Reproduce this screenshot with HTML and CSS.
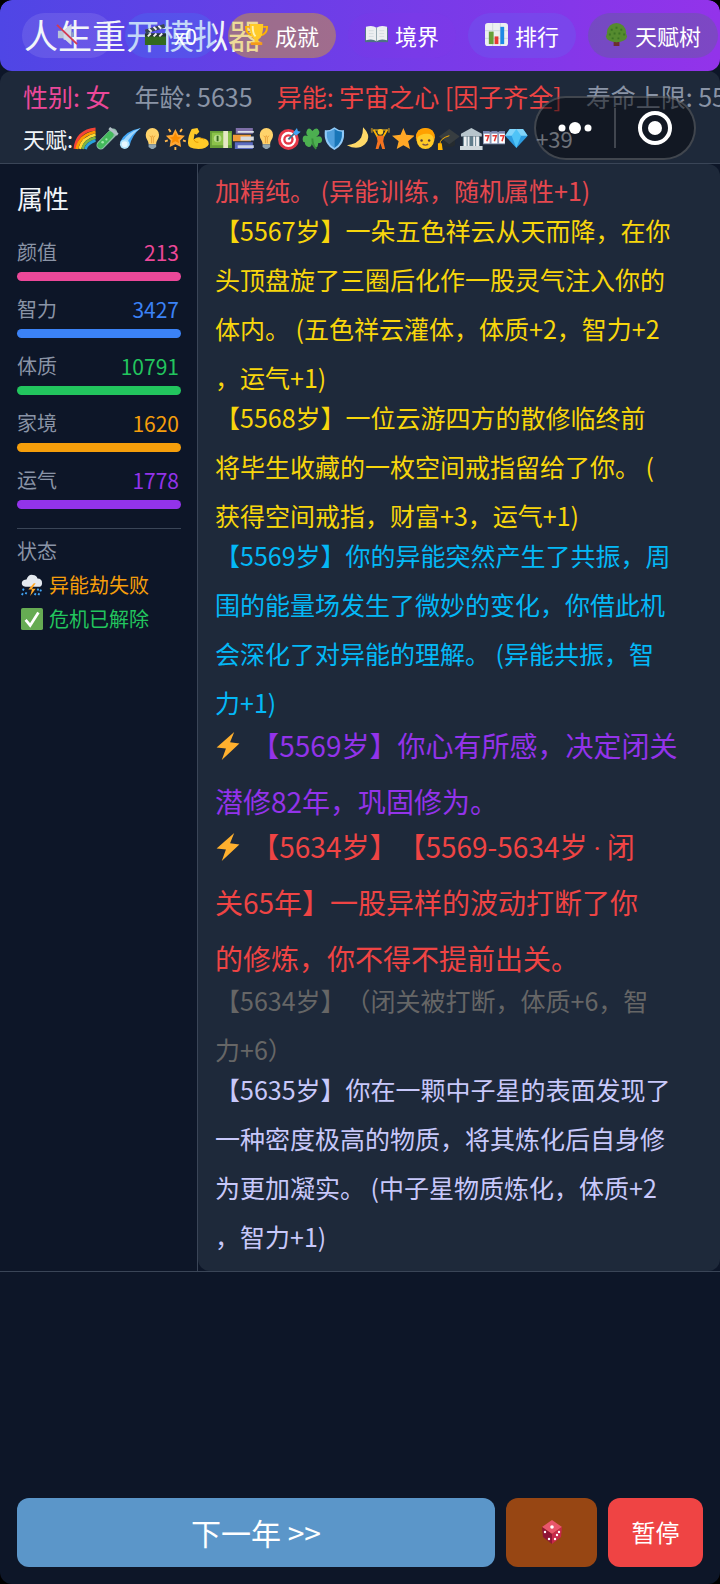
FILE: index.html
```
<!DOCTYPE html>
<html lang="zh-Hans">
<head>
  <meta charset="UTF-8">
  <meta name="viewport" content="width=device-width, initial-scale=1.0">
  <title>人生重开模拟器</title>
  <link rel="stylesheet" href="styles.css">
</head>
<body>
  <svg class="sprite" aria-hidden="true">
    <symbol id="mute" viewBox="0 0 24 24">
      <path d="M2 8h6l8-7v22l-8-7H2z" fill="#b9c3d8"/><path d="M8 8l8-7v22l-8-7z" fill="#d3d9e8"/>
      <path d="M16 8q5 4 0 8z" fill="#8d9ac4"/><path d="M1 2l21 20" stroke="#d23a55" stroke-width="2"/>
    </symbol>
    <symbol id="clapper" viewBox="0 0 24 24">
      <path d="M1 11h22v12H1z" fill="#33691e"/><path d="M1 11h22v3H1z" fill="#263238"/>
      <path d="M1 7l20-6 1 4L2 11z" fill="#37474f"/>
      <path d="M5 6l3 3M10 4l3 3M15 3l3 3M4 14l3-3M10 14l3-3M16 14l3-3" stroke="#eee" stroke-width="2"/>
    </symbol>
    <symbol id="trophy" viewBox="0 0 24 24">
      <path d="M5 4H1q0 8 7 9M19 4h4q0 8-7 9" fill="none" stroke="#ffb300" stroke-width="2"/>
      <path d="M5 1h14q0 14-5 16v3h-4v-3Q5 15 5 1z" fill="#ffca28"/><path d="M8 3q0 8 3 11" stroke="#fff3b0" stroke-width="2" fill="none"/>
      <path d="M6 20h12v3H6z" fill="#f59a1b"/>
    </symbol>
    <symbol id="book" viewBox="0 0 24 24">
      <path d="M0 5h24v15H0z" fill="#4e7184"/><path d="M1 4q7-2 11 1 4-3 11-1v14q-7-2-11 1-4-3-11-1z" fill="#eceff1"/>
      <path d="M12 5v14" stroke="#90a4ae"/><path d="M4 8h5M4 11h5M4 14h5M15 8h5M15 11h5M15 14h5" stroke="#d5dde1"/>
    </symbol>
    <symbol id="chart" viewBox="0 0 24 24">
      <rect width="24" height="24" rx="3" fill="#eceff1"/><path d="M0 8h24M0 16h24M8 0v24M16 0v24" stroke="#cfd8dc"/>
      <path d="M4 9h5v13H4z" fill="#689f38"/><path d="M10 14h4v8h-4z" fill="#e53935"/><path d="M16 4h4v18h-4z" fill="#1e88e5"/>
    </symbol>
    <symbol id="tree" viewBox="0 0 24 24">
      <path d="M9 18h6v6H9z" fill="#6d2f2f"/><circle cx="12" cy="10" r="10" fill="#558b2f"/><ellipse cx="12" cy="14" rx="11" ry="6" fill="#558b2f"/>
      <path d="M6 7h2M11 5h2M16 7h2M4 12h2M9 11h2M14 11h2M19 12h2M7 16h2M13 16h2" stroke="#3b7323" stroke-width="2"/>
    </symbol>
    <symbol id="rainbow" viewBox="0 0 24 24">
      <g fill="none" stroke-width="3"><path d="M2 23Q4 4 24 2" stroke="#f44336"/><path d="M4 23Q7 8 24 5" stroke="#ff9800"/><path d="M7 23Q10 11 24 8" stroke="#fdd835"/><path d="M10 23Q12 14 24 11" stroke="#7cb342"/><path d="M13 23Q15 17 24 14" stroke="#29a0dc"/></g>
    </symbol>
    <symbol id="tube" viewBox="0 0 24 24">
      <path d="M5 19L18 6" stroke="#8db9a7" stroke-width="9" stroke-linecap="round"/><path d="M5 19L15 8" stroke="#43b95b" stroke-width="7" stroke-linecap="round"/>
      <path d="M14 1l9 7" stroke="#b0bec5" stroke-width="3"/><circle cx="7" cy="16" r="1.4" fill="#9be7a6"/><circle cx="11" cy="13" r="1.2" fill="#9be7a6"/>
    </symbol>
    <symbol id="comet" viewBox="0 0 24 24">
      <path d="M1 16Q6 4 23 1 14 8 11 20z" fill="#42a5f5"/><path d="M4 15Q9 6 23 1 12 8 8 18z" fill="#9fd5fb"/><circle cx="6" cy="18" r="5" fill="#b3e5fc"/><circle cx="6" cy="18" r="3" fill="#e6f7ff"/>
    </symbol>
    <symbol id="bulb" viewBox="0 0 24 24">
      <path d="M12 1a7 7 0 0 1 7 7c0 5-3 6-3 10H8C8 14 5 13 5 8a7 7 0 0 1 7-7z" fill="#ffd36b"/>
      <path d="M9 9l2 2 1-2 1 2 2-2M11 11v6M13 11v6" fill="none" stroke="#e9a13b"/><path d="M8 18h8v3l-3 2h-2l-3-2z" fill="#90a4ae"/>
    </symbol>
    <symbol id="glow" viewBox="0 0 24 24">
      <path d="M12 2l3 6 7 1-5 5 1 7-6-3-6 3 1-7-5-5 7-1z" fill="#ffa733"/>
      <path d="M5 2l2 3M19 2l-2 3M1 15l3-1M23 15l-3-1M12 21v3" stroke="#ffb74d" stroke-width="2"/><path d="M12 6l2 4 4 1-3 2 1 4-4-2-4 2 1-4-3-2 4-1z" fill="#fb8c00"/>
    </symbol>
    <symbol id="muscle" viewBox="0 0 24 24">
      <path d="M5 2l6-1 2 4-3 3-2-1-1 6q5-4 9-1 7 0 7 6-2 5-11 5-11 0-11-6Q1 9 5 2z" fill="#ffca28"/><path d="M7 13q2 4 5 3M14 12q2-1 4 1" fill="none" stroke="#e59600"/>
    </symbol>
    <symbol id="money" viewBox="0 0 24 24">
      <path d="M0 4h24v18H0z" fill="#689f38"/><path d="M2 6h20v13H2z" fill="#8bc34a"/><path d="M14 4h5v18h-5z" fill="#e6e8c4"/>
      <circle cx="8" cy="12" r="4" fill="#b9dd8b"/><path d="M8 9v6" stroke="#33691e" stroke-width="2"/>
    </symbol>
    <symbol id="books" viewBox="0 0 24 24">
      <path d="M4 1h18v6H4z" fill="#7e6fa8"/><path d="M6 4h17v2H6z" fill="#dce1ea"/><path d="M1 8h19v7H1z" fill="#f09a37"/><path d="M9 10h14v4H9z" fill="#d8dbe0"/><path d="M3 16h19v7H3z" fill="#5c6bc0"/><path d="M6 19h17v3H6z" fill="#cdd3e8"/>
    </symbol>
    <symbol id="dart" viewBox="0 0 24 24">
      <circle cx="11" cy="13" r="11" fill="#e53948"/><circle cx="11" cy="13" r="8" fill="#fff"/><circle cx="11" cy="13" r="5.5" fill="#e53948"/><circle cx="11" cy="13" r="3" fill="#fff"/>
      <path d="M11 13l8-8" stroke="#37708f" stroke-width="2"/><path d="M16 6l4-5 1 3 3 1-5 4z" fill="#42a5f5"/>
    </symbol>
    <symbol id="clover" viewBox="0 0 24 24">
      <path d="M12 12Q4 9 6 4t6 0q5-5 7 0t-7 8q9-5 10 0t-4 5q0 6-4 4t-2-9q0 10-4 9t-4-5Q1 16 2 11t10 1z" fill="#4caf50"/><path d="M12 12q0 7 4 11" fill="none" stroke="#388e3c" stroke-width="2"/>
    </symbol>
    <symbol id="shield" viewBox="0 0 24 24">
      <path d="M12 0q5 4 10 3 2 15-10 21Q0 18 2 3q5 1 10-3z" fill="#90caf9"/><path d="M12 2v20Q3 17 4 5q4 0 8-3z" fill="#4f9fdc"/><path d="M12 2v20q9-5 8-17-4 0-8-3z" fill="#1976b8"/>
    </symbol>
    <symbol id="moon" viewBox="0 0 24 24"><path d="M18 0q10 10 2 18-8 7-19 1 11-1 15-8 2-5 2-11z" fill="#ffd968"/></symbol>
    <symbol id="lifter" viewBox="0 0 24 24">
      <path d="M2 3h20" stroke="#b5912d" stroke-width="1.5"/><path d="M3 1v5M21 1v5" stroke="#8a6d2b" stroke-width="2"/><path d="M5 3l4 7h6l4-7" fill="none" stroke="#ffb300" stroke-width="2"/>
      <circle cx="12" cy="5" r="3" fill="#ffca28"/><path d="M8 9h8l-1 6 2 8h-3l-2-6-2 6H7l2-8z" fill="#f4731f"/>
    </symbol>
    <symbol id="star" viewBox="0 0 24 24"><path d="M12 1l3 7 9 1-7 6 2 8-7-4-7 4 2-8-7-6 9-1z" fill="#ffa726"/></symbol>
    <symbol id="boy" viewBox="0 0 24 24">
      <circle cx="12" cy="11" r="10" fill="#f09a1a"/><circle cx="12" cy="14" r="9" fill="#ffca28"/><path d="M2 12Q2 1 12 1t10 11q-4-6-9-5-6 0-11 5z" fill="#ffa000"/>
      <circle cx="8" cy="14" r="1.3" fill="#5d4037"/><circle cx="16" cy="14" r="1.3" fill="#5d4037"/><path d="M9 18q3 2 6 0" fill="none" stroke="#795548" stroke-width="1.5"/>
    </symbol>
    <symbol id="cap" viewBox="0 0 24 24"><path d="M6 11h13v8q-6 4-13 0z" fill="#252b2f"/><path d="M13 2l11 8-11 8L2 10z" fill="#373d40"/><path d="M13 9q-10 3-10 9" fill="none" stroke="#ffb300"/><path d="M1 17h4l1 7H1z" fill="#ffb300"/></symbol>
    <symbol id="bank" viewBox="0 0 24 24">
      <path d="M12 1l11 6v3H1V7z" fill="#b7c5cc"/><path d="M3 10h18v10H3z" fill="#607d8b"/><path d="M4 10h3v10H4zM8 10h2v10H8zM14 10h2v10h-2zM17 10h3v10h-3z" fill="#eceff1"/><path d="M0 20h24v4H0z" fill="#cfd8dc"/>
    </symbol>
    <symbol id="slots" viewBox="0 0 24 24">
      <path d="M0 5h24v13H0z" fill="#8e9ab8"/><path d="M1 7h6v10H1zM9 7h6v10H9zM17 7h6v10h-6z" fill="#fff"/><path d="M0 4h7v2H0zM9 4h6v2H9zM17 4h7v2h-7z" fill="#7684b0"/>
      <path d="M2 9h4l-2 6M10 9h4l-2 6M18 9h4l-2 6" fill="none" stroke="#e53935" stroke-width="1.6"/>
    </symbol>
    <symbol id="gem" viewBox="0 0 24 24"><path d="M5 2h14l5 7-12 13L0 9z" fill="#2d9ce0"/><path d="M5 2h14l5 7H0z" fill="#81d4fa"/><path d="M7 9l5-7 5 7-5 13z" fill="#4fc3f7"/></symbol>
    <symbol id="bolt" viewBox="0 0 24 27"><path d="M18 0L1 15l9 1-4 11L23 11l-9-1z" fill="#ffb02e"/></symbol>
    <symbol id="storm" viewBox="0 0 24 24">
      <path d="M5 14q-5-1-4-5 1-3 5-3 2-6 7-5 4 0 5 4 5 0 5 5 0 4-4 4z" fill="#e4e9ef"/><path d="M14 10l-6 7h4l-2 7 6-8h-4l4-6z" fill="#ffa726"/><path d="M3 16l-1 2M6 20l-1 2M19 16l-1 2M22 17l-1 2M16 21l-1 2M2 21l-1 2M20 21l-1 2" stroke="#42a5f5" stroke-width="2"/>
    </symbol>
    <symbol id="check" viewBox="0 0 24 24"><rect width="24" height="24" rx="2" fill="#66ab53"/><path d="M5 13l5 6 9-14" fill="none" stroke="#fff" stroke-width="3"/></symbol>
    <symbol id="dice" viewBox="0 0 24 24">
      <path d="M12 0l10 7-10 7L2 7z" fill="#e8566b"/><path d="M2 7l10 7v10L3 17z" fill="#8f1535"/><path d="M22 7l-10 7v10l9-7z" fill="#c6284a"/>
      <g fill="#fff"><circle cx="12" cy="7" r="1.8"/><circle cx="5" cy="12" r="1.2"/><circle cx="9" cy="19" r="1.2"/><circle cx="15" cy="19" r="1.2"/><circle cx="17" cy="15" r="1.2"/><circle cx="19" cy="12" r="1.2"/></g>
    </symbol>
  </svg>

  <header class="topbar">
    <h1>人生重开模拟器</h1>
    <nav class="pills">
      <button class="pill mute" aria-label="静音"><svg><use href="#mute"/></svg></button>
      <button class="pill video"><svg><use href="#clapper"/></svg>x0</button>
      <button class="pill award"><svg><use href="#trophy"/></svg>成就</button>
      <button class="pill realm"><svg><use href="#book"/></svg>境界</button>
      <button class="pill rank"><svg><use href="#chart"/></svg>排行</button>
      <button class="pill talent"><svg><use href="#tree"/></svg>天赋树</button>
    </nav>
  </header>

  <section class="info">
    <div class="info-row">
      <span class="pink">性别: 女</span>
      <span>年龄: 5635</span>
      <span class="red">异能: 宇宙之心 [因子齐全]</span>
      <span>寿命上限: 55</span>
    </div>
    <div class="talents">
      <span class="talents-label">天赋:</span>
      <div class="talent-icons">
        <svg><use href="#rainbow"/></svg><svg><use href="#tube"/></svg><svg><use href="#comet"/></svg><svg><use href="#bulb"/></svg>
        <svg><use href="#glow"/></svg><svg><use href="#muscle"/></svg><svg><use href="#money"/></svg><svg><use href="#books"/></svg>
        <svg><use href="#bulb"/></svg><svg><use href="#dart"/></svg><svg><use href="#clover"/></svg><svg><use href="#shield"/></svg>
        <svg><use href="#moon"/></svg><svg><use href="#lifter"/></svg><svg><use href="#star"/></svg><svg><use href="#boy"/></svg>
        <svg><use href="#cap"/></svg><svg><use href="#bank"/></svg><svg><use href="#slots"/></svg><svg><use href="#gem"/></svg>
      </div>
      <span class="more">+39</span>
    </div>
    <div class="capsule">
      <button aria-label="更多"><svg viewBox="0 0 40 40" fill="#fff"><circle cx="7" cy="20" r="3.5"/><circle cx="20" cy="20" r="6"/><circle cx="33" cy="20" r="3.5"/></svg></button>
      <button aria-label="关闭"><svg viewBox="0 0 40 40"><circle cx="20" cy="20" r="15" fill="none" stroke="#fff" stroke-width="4"/><circle cx="20" cy="20" r="7" fill="#fff"/></svg></button>
    </div>
  </section>

  <main class="main">
    <aside class="sidebar">
      <h2>属性</h2>
      <div class="stat pink"><div class="stat-line"><span>颜值</span><b>213</b></div><div class="bar"></div></div>
      <div class="stat blue"><div class="stat-line"><span>智力</span><b>3427</b></div><div class="bar"></div></div>
      <div class="stat green"><div class="stat-line"><span>体质</span><b>10791</b></div><div class="bar"></div></div>
      <div class="stat orange"><div class="stat-line"><span>家境</span><b>1620</b></div><div class="bar"></div></div>
      <div class="stat purple"><div class="stat-line"><span>运气</span><b>1778</b></div><div class="bar"></div></div>
      <div class="status">
        <h3>状态</h3>
        <p class="orange"><svg><use href="#storm"/></svg>异能劫失败</p>
        <p class="green"><svg><use href="#check"/></svg>危机已解除</p>
      </div>
    </aside>

    <div class="log">
      <p class="rose">加精纯。 (异能训练，随机属性+1)</p>
      <p class="gold">【5567岁】一朵五色祥云从天而降，在你<br>头顶盘旋了三圈后化作一股灵气注入你的<br>体内。 (五色祥云灌体，体质+2，智力+2<br>，运气+1)</p>
      <p class="gold">【5568岁】一位云游四方的散修临终前<br>将毕生收藏的一枚空间戒指留给了你。 (<br>获得空间戒指，财富+3，运气+1)</p>
      <p class="sky">【5569岁】你的异能突然产生了共振，周<br>围的能量场发生了微妙的变化，你借此机<br>会深化了对异能的理解。 (异能共振，智<br>力+1)</p>
      <p class="big purple"><svg><use href="#bolt"/></svg> 【5569岁】你心有所感，决定闭关<br>潜修82年，巩固修为。</p>
      <p class="big red"><svg><use href="#bolt"/></svg> 【5634岁】【5569-5634岁<span class="dot">·</span>闭<br>关65年】一股异样的波动打断了你<br>的修炼，你不得不提前出关。</p>
      <p class="dim">【5634岁】（闭关被打断，体质+6，智<br>力+6）</p>
      <p class="lilac">【5635岁】你在一颗中子星的表面发现了<br>一种密度极高的物质，将其炼化后自身修<br>为更加凝实。 (中子星物质炼化，体质+2<br>，智力+1)</p>
    </div>
  </main>

  <footer class="actions">
    <button class="next">下一年 &gt;&gt;</button>
    <button class="dice" aria-label="随机"><svg><use href="#dice"/></svg></button>
    <button class="pause">暂停</button>
  </footer>
</body>
</html>
```
FILE: styles.css
```
* {
    margin: 0;
    padding: 0;
    box-sizing: border-box;
}

:root {
    --bg: #0d1628;
    --panel: #1e293a;
    --line: #3a4557;
    --muted: #8a94a6;
    --text: #f1f5f9;
}

html {
    background: #000;
}

body {
    min-height: 100vh;
    display: flex;
    flex-direction: column;
    overflow-x: hidden;
    border-radius: 12px;
    background: var(--bg);
    color: var(--text);
    font-family: "Noto Sans CJK SC", sans-serif;
    font-weight: 400;
    text-spacing-trim: space-all;
}

h1, h2, h3, b {
    font-weight: 400;
}

button {
    border: none;
    background: none;
    color: #fff;
    font: inherit;
    cursor: pointer;
}

svg {
    display: block;
    flex-shrink: 0;
}

.sprite {
    position: absolute;
    width: 0;
    height: 0;
}

.pink { color: #ec4899; }
.blue { color: #3b82f6; }
.green { color: #22c55e; }
.orange { color: #f59e0b; }
.purple { color: #9333ea; }
.red { color: #ef4444; }
.rose { color: #e5484f; }
.gold { color: #f8d60c; }
.sky { color: #04b8f6; }
.dim { color: #666; }
.lilac { color: #c8c8fa; }

/* top bar: the pills float over the title */
.topbar {
    position: relative;
    height: 71px;
    padding: 0 24px 2px;
    display: flex;
    align-items: center;
    border-radius: 12px;
    background: linear-gradient(90deg, #4f46e5, #9333ea);
}

.topbar h1 {
    font-size: 34px;
    line-height: 48px;
    white-space: nowrap;
}

.pills {
    position: absolute;
    inset: 0;
    padding: 0 22px;
    display: flex;
    align-items: center;
    gap: 12px;
    overflow: hidden;
}

.pill {
    height: 45px;
    min-width: 91px;
    padding: 0 17px 2px;
    display: flex;
    align-items: center;
    justify-content: center;
    flex-shrink: 0;
    gap: 7px;
    border-radius: 23px;
    font-size: 22px;
    white-space: nowrap;
}

.pill svg {
    width: 23px;
    height: 23px;
}

.mute { background: rgba(255, 255, 255, 0.1); }
.video { background: rgba(59, 130, 246, 0.25); }
.award { background: rgba(234, 179, 8, 0.4); }
.realm { background: rgba(147, 51, 234, 0.1); }
.rank { background: rgba(99, 102, 241, 0.3); }
.talent { background: rgba(75, 120, 110, 0.3); }

.info {
    position: relative;
    height: 93px;
    padding: 4px 0 0 23px;
    border-bottom: 1px solid var(--line);
    border-radius: 12px 12px 0 0;
    background: var(--panel);
}

.info-row {
    display: flex;
    gap: 24px;
    overflow: hidden;
    color: var(--muted);
    font-size: 25px;
    line-height: 42px;
    white-space: nowrap;
}

.info-row .pink { color: #ec4899; }
.info-row .red { color: #ef4444; }

.talents {
    display: flex;
    align-items: center;
    font-size: 22px;
    line-height: 42px;
}

.talent-icons {
    width: 455px;
    display: grid;
    grid-template-columns: repeat(20, 1fr);
}

.talent-icons svg {
    width: 100%;
    height: 23px;
}

.more {
    margin-left: 8px;
    color: #d5dbe5;
}

.capsule {
    position: absolute;
    top: 25px;
    right: 24px;
    width: 162px;
    height: 64px;
    display: flex;
    align-items: center;
    border: 2px solid rgba(255, 255, 255, 0.2);
    border-radius: 32px;
    background: rgba(5, 7, 12, 0.5);
}

.capsule button {
    flex: 1;
    height: 40px;
    display: flex;
    align-items: center;
    justify-content: center;
}

.capsule button + button {
    border-left: 2px solid rgba(255, 255, 255, 0.2);
}

.capsule svg {
    width: 40px;
    height: 40px;
}

.main {
    display: flex;
    border-bottom: 1px solid var(--line);
}

.sidebar {
    width: 198px;
    flex-shrink: 0;
    padding: 16px 16px 0 17px;
    border-right: 1px solid var(--line);
}

.sidebar h2 {
    margin-bottom: 19px;
    font-size: 26px;
    line-height: 36px;
}

.stat {
    margin-bottom: 11px;
}

.stat-line {
    height: 37px;
    display: flex;
    justify-content: space-between;
    font-size: 20px;
    line-height: 34px;
}

.stat-line span {
    color: var(--muted);
}

.stat-line b {
    padding-right: 2px;
    font-size: 21px;
}

.bar {
    height: 9px;
    border-radius: 5px;
    background: currentColor;
}

.status {
    margin-top: 19px;
    padding-top: 5px;
    border-top: 1px solid var(--line);
    font-size: 20px;
    line-height: 34px;
}

.status h3 {
    color: var(--muted);
    font-size: 20px;
}

.status p {
    display: flex;
    align-items: center;
    gap: 6px;
    padding-left: 4px;
}

.status svg {
    width: 22px;
    height: 22px;
}

.log {
    flex: 1;
    min-width: 0;
    padding: 6px 16px 15px 17px;
    display: flex;
    flex-direction: column;
    border-radius: 12px;
    background: var(--panel);
    font-size: 25px;
    line-height: 49px;
    white-space: nowrap;
}

.log p {
    margin: -4px 0 -5px;
}

.log .big {
    margin: -5px 0 -6px;
    font-size: 28px;
    line-height: 56px;
}

.log svg {
    display: inline-block;
    width: 26px;
    height: 28px;
    margin-right: 4px;
    vertical-align: -3px;
}

.dot {
    padding: 0 6px;
    font-family: Roboto, sans-serif;
    line-height: 1;
}

.actions {
    margin-top: auto;
    padding: 17px;
    display: flex;
    gap: 11px;
}

.actions button {
    height: 69px;
    padding-bottom: 2px;
    display: flex;
    align-items: center;
    justify-content: center;
    border-radius: 12px;
    font-size: 24px;
}

.actions .next {
    flex: 1;
    background: #5b96c9;
    font-size: 30px;
}

.actions .dice {
    width: 91px;
    background: #974613;
}

.actions .dice svg {
    width: 24px;
    height: 24px;
}

.actions .pause {
    width: 95px;
    background: #ef4444;
}
```
